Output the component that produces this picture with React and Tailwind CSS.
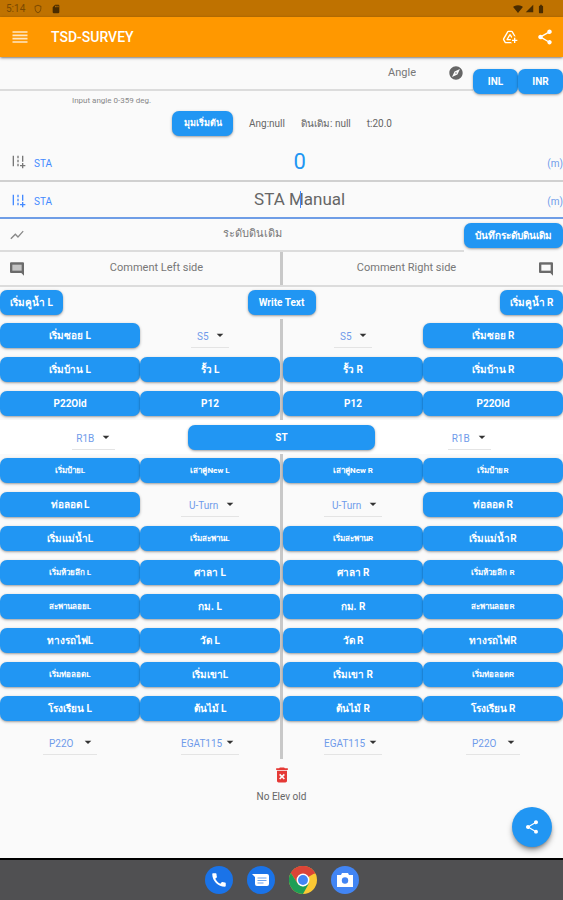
import React from 'react';
import {
  MdAddRoad,
  MdAddToDrive,
  MdArrowDropDown,
  MdBatteryFull,
  MdCall,
  MdDeleteForever,
  MdExplore,
  MdOutlineShield,
  MdReorder,
  MdSdCard,
  MdShare,
  MdShowChart,
  MdSignalCellular4Bar,
  MdSignalWifi4Bar,
} from 'react-icons/md';

// a cell is a button label, a button with small text, or a dropdown
const small = (label) => ({ label, size: 'text-[8px]' });
const pick = (name, value, width, pad = 'pl-[6px]') => ({ name, value, width, pad });

const upperLeft = [
  'เริ่มซอย L', pick('Sign left', 'S5', 'w-[38px]'),
  'เริ่มบ้าน L', 'รั้ว L',
  'P22Old', 'P12',
];

const upperRight = [
  pick('Sign right', 'S5', 'w-[38px]'), 'เริ่มซอย R',
  'รั้ว R', 'เริ่มบ้าน R',
  'P12', 'P22Old',
];

const lowerLeft = [
  small('เริ่มป้ายL'), small('เสาคู่New L'),
  'ท่อลอด L', pick('Turn left', 'U-Turn', 'w-[58px]', 'pl-2'),
  'เริ่มแม่น้ำL', small('เริ่มสะพานL'),
  small('เริ่มห้วยลึก L'), 'ศาลา L',
  small('สะพานลอยL'), 'กม. L',
  'ทางรถไฟL', 'วัด L',
  small('เริ่มท่อลอดL'), 'เริ่มเขาL',
  'โรงเรียน L', 'ต้นไม้ L',
  pick('Pole left', 'P22O', 'w-[54px]'), pick('EGAT left', 'EGAT115', 'w-[58px]', 'pl-0'),
];

const lowerRight = [
  small('เสาคู่New R'), small('เริ่มป้ายR'),
  pick('Turn right', 'U-Turn', 'w-[58px]', 'pl-2'), 'ท่อลอด R',
  small('เริ่มสะพานR'), 'เริ่มแม่น้ำR',
  'ศาลา R', small('เริ่มห้วยลึก R'),
  'กม. R', small('สะพานลอยR'),
  'วัด R', 'ทางรถไฟR',
  'เริ่มเขา R', small('เริ่มท่อลอดR'),
  'ต้นไม้ R', 'โรงเรียน R',
  pick('EGAT right', 'EGAT115', 'w-[58px]', 'pl-0'), pick('Pole right', 'P22O', 'w-[54px]'),
];

export default function App() {
  return (
    <div className="relative flex min-h-screen flex-col bg-[#fafafa] font-['Roboto','Noto_Sans',sans-serif] text-[#666]">
      <StatusBar />
      <AppBar />

      <main className="flex flex-1 flex-col">
        {/* Angle */}
        <div className="flex items-start">
          <div className="flex-1">
            <div className="flex h-[34px] items-center border-b-2 border-[#dcdcdc] pr-[9px]">
              <input
                aria-label="Angle"
                placeholder="Angle"
                className="min-w-0 flex-1 bg-transparent pr-8 text-right text-[11px] outline-none placeholder:text-[#777]"
              />
              <MdExplore className="size-4 text-[#666]" />
            </div>
            <p className="pl-[72px] pt-1 text-[8px] leading-3 text-[#888]">Input angle 0-359 deg.</p>
          </div>
          <div className="flex pt-3">
            <ActionButton label="INL" className="w-[45px]" />
            <ActionButton label="INR" className="w-[45px]" />
          </div>
        </div>

        <div className="flex items-center pl-[172px] pt-1 text-[10px]">
          <ActionButton label="มุมเริ่มต้น" size="text-[9px]" className="w-[61px]" />
          <span className="ml-4">Ang:null</span>
          <span className="ml-4">ดินเดิม: null</span>
          <span className="ml-4">t:20.0</span>
        </div>

        <StationRow />
        <StationRow manual />

        {/* Ground level */}
        <div className="flex h-[33px] items-center">
          <div className="flex h-full flex-1 items-center border-b-2 border-[#dcdcdc] pl-[9px]">
            <MdShowChart className="size-4 text-[#888]" />
            <input
              aria-label="ระดับดินเดิม"
              placeholder="ระดับดินเดิม"
              className="ml-4 min-w-0 flex-1 bg-transparent text-center text-[11px] outline-none placeholder:text-[#777]"
            />
          </div>
          <ActionButton label="บันทึกระดับดินเดิม" className="w-[99px]" />
        </div>

        {/* Comments */}
        <div className="flex h-[35px] border-b-2 border-[#dcdcdc]">
          <div className="flex flex-1 items-center pl-[9px]">
            <CommentIcon inner="#c4c4c4" />
            <CommentInput label="Comment Left side" className="pl-2" />
          </div>
          <div className="w-[3px] bg-[#c8c8c8]" />
          <div className="flex flex-1 items-center pr-[9px]">
            <CommentInput label="Comment Right side" className="pr-2" />
            <CommentIcon inner="#fafafa" />
          </div>
        </div>

        <div className="flex justify-between pb-1 pt-[3px]">
          <ActionButton label="เริ่มคูน้ำ L" className="w-[63px]" />
          <ActionButton label="Write Text" className="w-[68px]" />
          <ActionButton label="เริ่มคูน้ำ R" className="w-[63px]" />
        </div>

        <SidePanels left={upperLeft} right={upperRight} />

        <div className="grid grid-cols-3 items-center justify-items-center bg-white pb-1 pt-[5px]">
          <Dropdown name="Route left" value="R1B" width="w-[43px]" />
          <ActionButton label="ST" className="w-full" />
          <Dropdown name="Route right" value="R1B" width="w-[43px]" />
        </div>

        <SidePanels left={lowerLeft} right={lowerRight} />

        <div className="flex flex-col items-center pt-[6px]">
          <button aria-label="Delete" className="text-[#e53935]">
            <MdDeleteForever className="size-5" />
          </button>
          <p className="pt-1 text-[10px] leading-4">No Elev old</p>
        </div>
      </main>

      <button
        aria-label="Share"
        className="absolute bottom-[53px] right-[11px] flex size-10 items-center justify-center rounded-full bg-[#2196f3] text-white shadow-md shadow-black/40"
      >
        <MdShare className="size-4" />
      </button>

      <Dock />
    </div>
  );
}

function StatusBar() {
  return (
    <div className="flex h-[17px] items-center justify-between bg-[#bf7200] pl-[6px] pr-[17px] text-[#4a2c00]">
      <div className="flex items-center gap-2">
        <span className="text-[10px] text-[#7a4900]">5:14</span>
        <MdOutlineShield className="size-[10px] text-[#7a4900]" />
        <MdSdCard className="size-[10px]" />
      </div>
      <div className="flex items-center gap-[2px]">
        <MdSignalWifi4Bar className="size-[10px]" />
        <MdSignalCellular4Bar className="size-[9px]" />
        <MdBatteryFull className="size-[10px]" />
      </div>
    </div>
  );
}

function AppBar() {
  return (
    <header className="z-10 flex h-10 items-center bg-[#ff9800] pl-[10px] pr-[9px] text-white shadow-sm shadow-black/40">
      <button aria-label="Menu">
        <MdReorder className="size-5 text-[#ffe6c4]" />
      </button>
      <h1 className="ml-[21px] flex-1 text-[14px] font-medium">TSD-SURVEY</h1>
      <button aria-label="Add to drive" className="mr-[18px]">
        <MdAddToDrive className="size-4" />
      </button>
      <button aria-label="Share">
        <MdShare className="size-[18px]" />
      </button>
    </header>
  );
}

function ActionButton({ label, size = 'text-[10px]', className = 'w-full' }) {
  return (
    <button
      className={`h-[25px] whitespace-nowrap rounded-[7px] bg-[#2196f3] text-center font-bold text-white shadow-sm shadow-black/30 ${size} ${className}`}
    >
      {label}
    </button>
  );
}

function Dropdown({ name, value, width, pad = 'pl-1' }) {
  return (
    <div className={`relative h-[25px] border-b border-[#e4e4e4] ${width}`}>
      <select
        aria-label={name}
        defaultValue={value}
        className={`h-full w-full appearance-none bg-transparent text-[10px] text-[#6f9bea] outline-none ${pad}`}
      >
        <option>{value}</option>
      </select>
      <MdArrowDropDown className="pointer-events-none absolute right-px top-1 size-4 text-[#333]" />
    </div>
  );
}

function StationRow({ manual = false }) {
  return (
    <div
      className={`flex items-center border-b-2 pl-[10px] ${
        manual ? 'h-[37px] border-[#6f9de6]' : 'mt-[6px] h-10 border-[#d0d0d0]'
      }`}
    >
      <MdAddRoad className={`size-4 ${manual ? 'text-[#448aff]' : 'text-[#777]'}`} />
      <span className="ml-2 pt-1 text-[10px] text-[#448aff]">STA</span>
      <div className="relative flex-1">
        <input
          aria-label={manual ? 'STA Manual' : 'STA'}
          placeholder={manual ? 'STA Manual' : undefined}
          defaultValue={manual ? undefined : '0'}
          className={`w-full bg-transparent text-center outline-none placeholder:text-[#666] ${
            manual ? 'text-[17px]' : 'text-[22px] text-[#2196f3]'
          }`}
        />
        {manual && <span className="absolute inset-y-1 left-1/2 w-px bg-[#448aff]" />}
      </div>
      <span className="pt-1 text-[10px] text-[#6f9bea]">(m)</span>
    </div>
  );
}

function CommentInput({ label, className }) {
  return (
    <input
      aria-label={label}
      placeholder={label}
      className={`min-w-0 flex-1 bg-transparent text-center text-[11px] outline-none placeholder:text-[#777] ${className}`}
    />
  );
}

function CommentIcon({ inner }) {
  return (
    <svg viewBox="0 0 24 24" className="size-4">
      <path d="M3 2h18a1.500 1.500 0 0 1 1.500 1.500V22l-4-4H3a1.500 1.500 0 0 1-1.500-1.500v-13A1.500 1.500 0 0 1 3 2z" fill="#6b6b6b" />
      <path d="M5 5.500h14v9H5z" fill={inner} />
    </svg>
  );
}

function SidePanels({ left, right }) {
  return (
    <div className="flex">
      <Panel cells={left} />
      <div className="w-[3px] bg-[#c8c8c8]" />
      <Panel cells={right} />
    </div>
  );
}

function Panel({ cells }) {
  return (
    <div className="grid flex-1 grid-cols-2 items-center justify-items-center gap-y-[9px] py-1">
      {cells.map((cell, idx) => {
        if (typeof cell === 'string') return <ActionButton key={idx} label={cell} />;
        if (cell.label) return <ActionButton key={idx} label={cell.label} size={cell.size} />;
        return <Dropdown key={idx} {...cell} />;
      })}
    </div>
  );
}

function Dock() {
  return (
    <nav className="flex h-[42px] items-center justify-center gap-[14px] border-t-2 border-black bg-[#505052]">
      <button aria-label="Phone" className="flex size-7 items-center justify-center rounded-full bg-[#1a73e8] text-white">
        <MdCall className="size-[18px]" />
      </button>
      <button aria-label="Messages" className="flex size-7 items-center justify-center rounded-full bg-[#1a73e8]">
        <svg viewBox="0 0 20 20" className="size-5">
          <path d="M1 4h15a2 2 0 0 1 2 2v8a2 2 0 0 1-2 2H6a2 2 0 0 1-2-2V7z" fill="#fff" />
          <path d="M6.500 8h9M6.500 10.500h9M6.500 13h6" stroke="#6aa3f0" strokeWidth="1" />
        </svg>
      </button>
      <button aria-label="Chrome" className="size-7">
        <svg viewBox="0 0 48 48" className="size-7">
          <circle cx="24" cy="24" r="24" fill="#fbc934" />
          <path d="M24 24 3.200 12A24 24 0 0 1 44.800 12z" fill="#db4437" />
          <path d="M24 13h20.800A24 24 0 0 0 3.200 12l11 17z" fill="#db4437" />
          <path d="M3.200 12A24 24 0 0 0 24 48l10-18-10 5-9.500-5.500z" fill="#1e9e56" />
          <circle cx="24" cy="24" r="11" fill="#fff" />
          <circle cx="24" cy="24" r="8.500" fill="#4285f4" />
        </svg>
      </button>
      <button aria-label="Camera" className="flex size-7 items-center justify-center rounded-full bg-[#4285f4]">
        <svg viewBox="0 0 20 20" className="size-5">
          <path d="M2 5h4l1-2h6l1 2h4v12H2z" fill="#fff" />
          <circle cx="10" cy="10.500" r="3.200" fill="#4285f4" />
        </svg>
      </button>
    </nav>
  );
}
